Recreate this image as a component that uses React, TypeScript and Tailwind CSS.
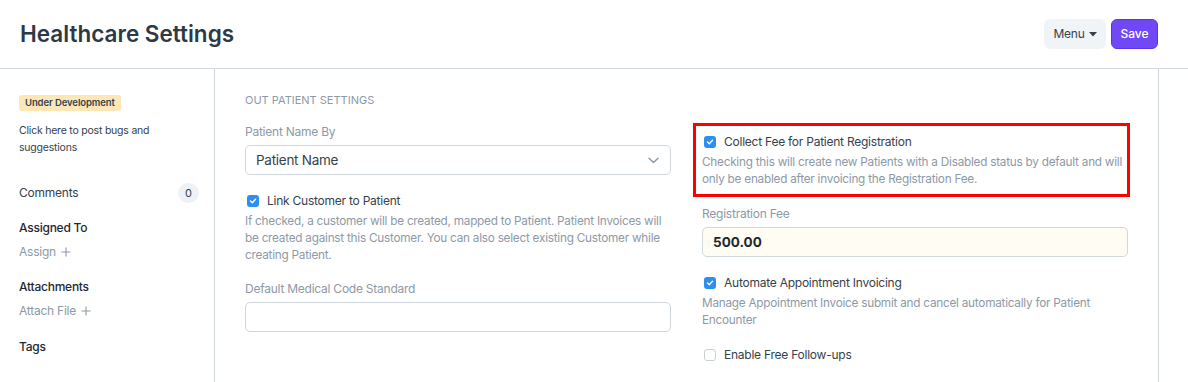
import React from "react";

const Check = ({ checked }: { checked: boolean }) =>
  checked ? (
    <span className="flex h-[12px] w-[12px] shrink-0 items-center justify-center rounded-[3px] bg-[#2d8ff0]">
      <svg width="8" height="8" viewBox="0 0 8 8" fill="none">
        <path d="M1.5 4.1 L3.3 5.8 L6.5 2.3" stroke="white" strokeWidth="1.4" strokeLinecap="round" strokeLinejoin="round" />
      </svg>
    </span>
  ) : (
    <span className="h-[12px] w-[12px] shrink-0 rounded-[3px] border border-[#c9d0d6] bg-white" />
  );

const Plus = () => (
  <svg width="10" height="10" viewBox="0 0 10 10" fill="none">
    <path d="M5 0.5 V9.5 M0.5 5 H9.5" stroke="#8d99a6" strokeWidth="1.1" />
  </svg>
);

const CheckRow = ({ checked, label, className }: { checked: boolean; label: string; className: string }) => (
  <div className={`flex items-center gap-[8px] pl-[2px] text-[12px] leading-[18px] tracking-[-0.02em] text-[#36414c] ${className}`}>
    <Check checked={checked} />
    {label}
  </div>
);

const Desc = ({ lines, className }: { lines: string[]; className: string }) => (
  <p className={`whitespace-nowrap text-[11.75px] leading-[17px] tracking-[-0.02em] text-[#8d99a6] ${className}`}>
    {lines.map((l, i) => (
      <span key={i} className="block">
        {l}
      </span>
    ))}
  </p>
);

const Label = ({ text, className }: { text: string; className: string }) => (
  <div className={`text-[12px] leading-[18px] tracking-[-0.02em] text-[#8d99a6] ${className}`}>{text}</div>
);

export default function App() {
  return (
    <div className="h-[382px] w-[1188px] overflow-hidden bg-white text-[#1f272e]" style={{ fontFamily: "Inter, 'Noto Sans', sans-serif" }}>
      <header className="flex h-[69px] items-center border-b border-[#d1d8dd] pl-[20px] pr-[30px]">
        <h1 className="flex-1 text-[22.5px] font-semibold leading-none text-[#2e3946]">Healthcare Settings</h1>
        <div className="flex items-center gap-[5px]">
          <button className="flex h-[30px] w-[62px] items-center justify-center gap-[4px] rounded-[6px] bg-[#f0f4f7] text-[12px] tracking-[-0.02em] text-[#36414c]">
            Menu
            <svg width="8" height="5" viewBox="0 0 8 5"><path d="M0 0 H8 L4 4.5 Z" fill="#36414c" /></svg>
          </button>
          <button className="flex h-[30px] w-[47px] items-center justify-center rounded-[6px] border border-[#5a33e6] bg-[#7048f6] text-[12px] font-medium text-white">
            Save
          </button>
        </div>
      </header>
      <div className="flex h-[313px]">
        <aside className="w-[215px] shrink-0 border-r border-[#d1d8dd] pl-[19px] pr-[15px]">
          <div className="mt-[26px] inline-flex h-[16px] items-center rounded-[3px] bg-[#fde7b6] px-[6px] text-[9.5px] font-semibold tracking-[-0.01em] text-[#36414c]">
            Under Development
          </div>
          <p className="mt-[10px] text-[10.5px] leading-[17px] tracking-[-0.02em] text-[#36414c]">
            Click here to post bugs and
            <br />
            suggestions
          </p>
          <div className="mt-[27px] flex h-[20px] items-center justify-between">
            <span className="text-[12px] tracking-[-0.02em] text-[#36414c]">Comments</span>
            <span className="flex h-[20px] w-[21px] items-center justify-center rounded-full bg-[#eef2f6] text-[11px] text-[#36414c]">0</span>
          </div>
          <div className="mt-[15px] text-[12px] font-medium leading-[20px] tracking-[-0.02em] text-[#1f272e]">Assigned To</div>
          <div className="mt-[4px] flex items-center gap-[5px] text-[12px] leading-[20px] tracking-[-0.02em] text-[#8d99a6]">
            Assign <Plus />
          </div>
          <div className="mt-[15px] text-[12px] font-medium leading-[20px] tracking-[-0.02em] text-[#1f272e]">Attachments</div>
          <div className="mt-[4px] flex items-center gap-[5px] text-[12px] leading-[20px] tracking-[-0.02em] text-[#8d99a6]">
            Attach File <Plus />
          </div>
          <div className="mt-[16px] text-[12px] font-medium leading-[20px] tracking-[-0.02em] text-[#1f272e]">Tags</div>
        </aside>
        <main className="w-[944px] shrink-0 border-r border-[#d1d8dd] px-[30px]">
          <div className="pt-[23px] text-[11px] uppercase leading-[16px] text-[#8d99a6]">Out Patient Settings</div>
          <div className="flex gap-[31px]">
            <div className="w-[426px]">
              <Label text="Patient Name By" className="mt-[15px]" />
              <div className="mt-[4px] flex h-[30px] items-center justify-between rounded-[5px] border border-[#d1d8dd] pl-[10px] pr-[11px]">
                <span className="text-[13.5px] tracking-[-0.02em] text-[#36414c]">Patient Name</span>
                <svg width="11" height="7" viewBox="0 0 11 7" fill="none"><path d="M1 1.2 L5.5 5.5 L10 1.2" stroke="#8d99a6" strokeWidth="1.4" strokeLinecap="round" strokeLinejoin="round" /></svg>
              </div>
              <CheckRow checked label="Link Customer to Patient" className="mt-[17px]" />
              <Desc
                className="mt-[3px]"
                lines={[
                  "If checked, a customer will be created, mapped to Patient. Patient Invoices will",
                  "be created against this Customer. You can also select existing Customer while",
                  "creating Patient.",
                ]}
              />
              <Label text="Default Medical Code Standard" className="mt-[16px]" />
              <div className="mt-[4px] h-[30px] rounded-[5px] border border-[#d1d8dd]" />
            </div>
            <div className="w-[426px]">
              <div className="-ml-[9px] -mr-[2px] mt-[15px] border-[3px] border-[#ff0000] pb-[6px] pl-[6px] pr-[2px] pt-[7px]">
                <CheckRow checked label="Collect Fee for Patient Registration" className="" />
                <Desc
                  className="mt-[3px]"
                  lines={[
                    "Checking this will create new Patients with a Disabled status by default and will",
                    "only be enabled after invoicing the Registration Fee.",
                  ]}
                />
              </div>
              <Label text="Registration Fee" className="mt-[8px]" />
              <div className="mt-[4px] flex h-[30px] items-center rounded-[5px] border border-[#d1d8dd] bg-[#fffdf3] px-[10px] text-[13.5px] font-bold text-[#1f272e]">
                500.00
              </div>
              <CheckRow checked label="Automate Appointment Invoicing" className="mt-[17px]" />
              <Desc
                className="mt-[3px]"
                lines={["Manage Appointment Invoice submit and cancel automatically for Patient", "Encounter"]}
              />
              <CheckRow checked={false} label="Enable Free Follow-ups" className="mt-[17px]" />
            </div>
          </div>
        </main>
      </div>
    </div>
  );
}
